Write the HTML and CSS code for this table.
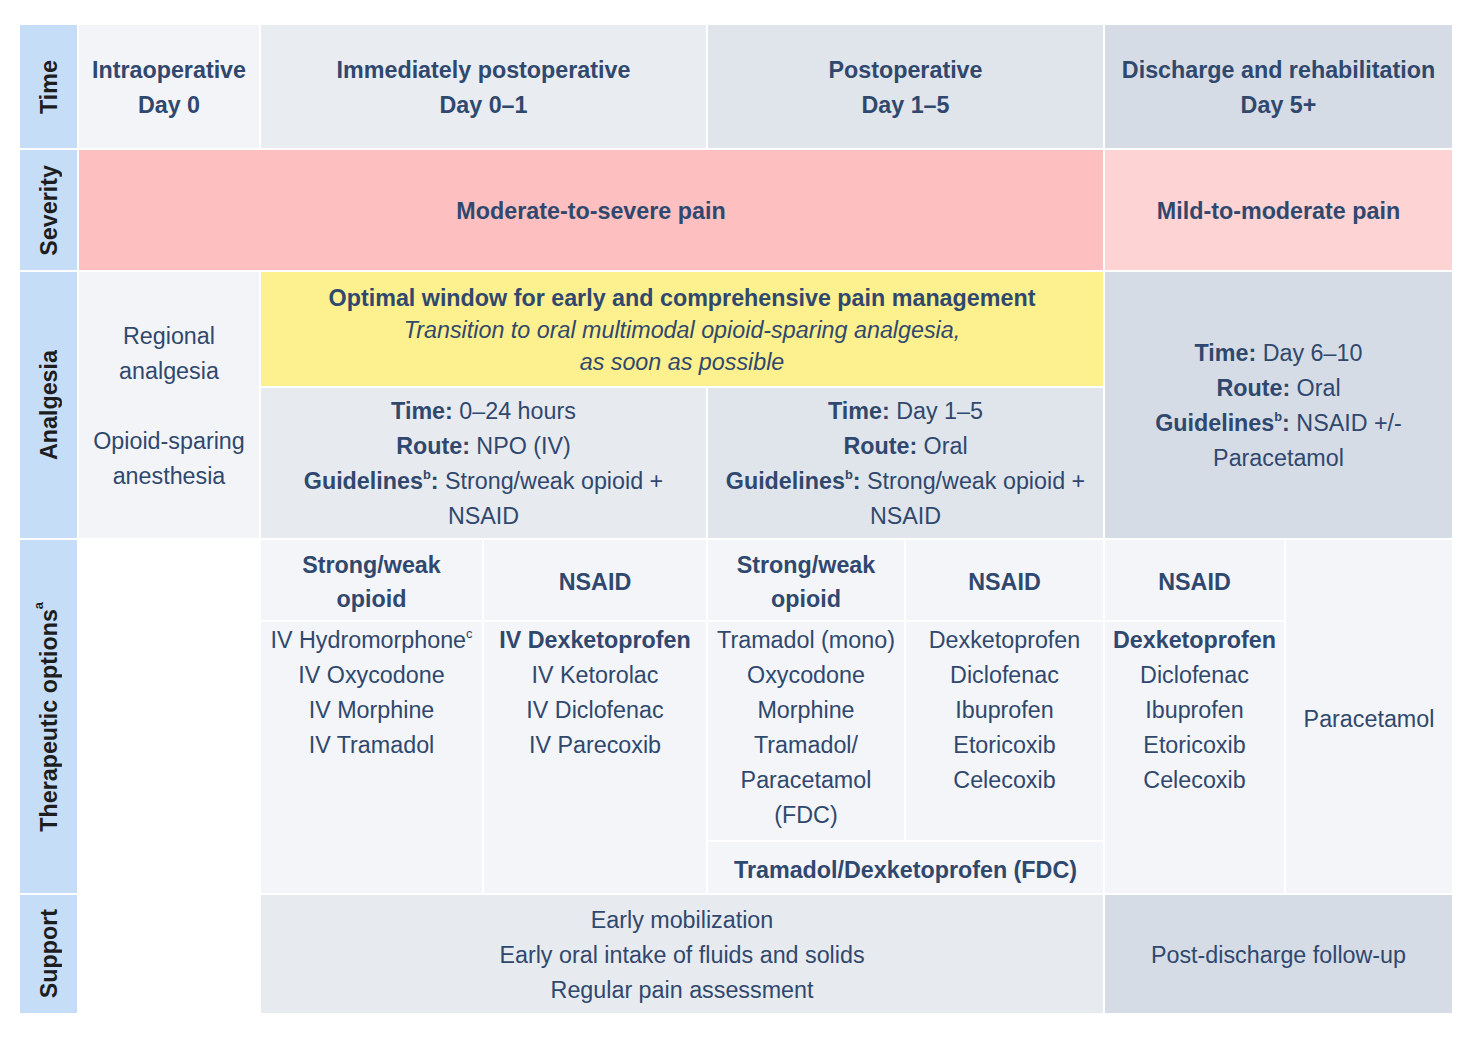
FILE: index.html
```html
<!DOCTYPE html>
<html lang="en">
<head>
<meta charset="utf-8">
<title>Perioperative pain management</title>
<link rel="stylesheet" href="styles.css">
</head>
<body>
<div class="chart">
  <!-- Time row -->
  <div class="cell label lab-time"><span class="vtext">Time</span></div>
  <div class="cell head bg-a c-a r-1"><b>Intraoperative<br>Day 0</b></div>
  <div class="cell head bg-b c-b r-1"><b>Immediately postoperative<br>Day 0–1</b></div>
  <div class="cell head bg-c c-c r-1"><b>Postoperative<br>Day 1–5</b></div>
  <div class="cell head bg-d c-d r-1"><b>Discharge and rehabilitation<br>Day 5+</b></div>

  <!-- Severity row -->
  <div class="cell label lab-sev"><span class="vtext">Severity</span></div>
  <div class="cell sev-strong"><b>Moderate-to-severe pain</b></div>
  <div class="cell sev-mild"><b>Mild-to-moderate pain</b></div>

  <!-- Analgesia -->
  <div class="cell label lab-anal"><span class="vtext">Analgesia</span></div>
  <div class="cell bg-a anal-a">Regional<br>analgesia<br><br>Opioid-sparing<br>anesthesia</div>
  <div class="cell window">
    <div><b>Optimal window for early and comprehensive pain management</b><br><i>Transition to oral multimodal opioid-sparing analgesia,<br>as soon as possible</i></div>
  </div>
  <div class="cell bg-b2 anal-b"><div><b>Time:</b> 0–24 hours<br><b>Route:</b> NPO (IV)<br><b>Guidelines<sup>b</sup>:</b> Strong/weak opioid +<br>NSAID</div></div>
  <div class="cell bg-c anal-c"><div><b>Time:</b> Day 1–5<br><b>Route:</b> Oral<br><b>Guidelines<sup>b</sup>:</b> Strong/weak opioid +<br>NSAID</div></div>
  <div class="cell bg-d anal-d"><div><b>Time:</b> Day 6–10<br><b>Route:</b> Oral<br><b>Guidelines<sup>b</sup>:</b> NSAID +/-<br>Paracetamol</div></div>

  <!-- Therapeutic options -->
  <div class="cell label lab-ther"><span class="vtext">Therapeutic options<sup>a</sup></span></div>

  <div class="cell th-head bg-t tb1"><b>Strong/weak<br>opioid</b></div>
  <div class="cell th-head bg-t tb2"><b>NSAID</b></div>
  <div class="cell th-head bg-t tc1"><b>Strong/weak<br>opioid</b></div>
  <div class="cell th-head bg-t tc2"><b>NSAID</b></div>
  <div class="cell th-head bg-t td1"><b>NSAID</b></div>
  <div class="cell bg-t td2">Paracetamol</div>

  <div class="cell list bg-t lb1"><div>IV Hydromorphone<sup>c</sup><br>IV Oxycodone<br>IV Morphine<br>IV Tramadol</div></div>
  <div class="cell list bg-t lb2"><div><b>IV Dexketoprofen</b><br>IV Ketorolac<br>IV Diclofenac<br>IV Parecoxib</div></div>
  <div class="cell list bg-t lc1"><div>Tramadol (mono)<br>Oxycodone<br>Morphine<br>Tramadol/<br>Paracetamol<br>(FDC)</div></div>
  <div class="cell list bg-t lc2"><div>Dexketoprofen<br>Diclofenac<br>Ibuprofen<br>Etoricoxib<br>Celecoxib</div></div>
  <div class="cell list bg-t ld1"><div><b>Dexketoprofen</b><br>Diclofenac<br>Ibuprofen<br>Etoricoxib<br>Celecoxib</div></div>
  <div class="cell bg-t fdc"><b>Tramadol/Dexketoprofen (FDC)</b></div>

  <!-- Support -->
  <div class="cell label lab-sup"><span class="vtext">Support</span></div>
  <div class="cell bg-b2 sup-main"><div>Early mobilization<br>Early oral intake of fluids and solids<br>Regular pain assessment</div></div>
  <div class="cell bg-d sup-d">Post-discharge follow-up</div>
</div>
</body>
</html>
```
FILE: styles.css
```css
html, body {
  margin: 0;
  padding: 0;
  background: #ffffff;
}

body {
  font-family: "Liberation Sans", Arial, sans-serif;
  font-size: 23.3px;
  line-height: 35px;
  color: #30486d;
}

.chart {
  display: grid;
  grid-template-columns: 57px 180px 221px 222px 196px 197px 179px 166px;
  grid-template-rows: 123px 120px 114px 150px 80px 218px 51px 118px;
  gap: 2px;
  margin: 25px 0 0 20px;
  width: 1432px;
}

.cell {
  display: flex;
  align-items: center;
  justify-content: center;
  text-align: center;
  min-width: 0;
  overflow: hidden;
  padding-top: 2px;
  box-sizing: border-box;
}

b { font-weight: 700; }

sup {
  font-size: 0.55em;
  line-height: 0;
  vertical-align: 0.75em;
}

/* vertical labels */
.label {
  background: #c6ddf8;
  color: #1e1e1e;
  font-weight: 700;
  padding-top: 0;
}
.vtext {
  writing-mode: vertical-rl;
  transform: rotate(180deg);
  white-space: nowrap;
  line-height: 28px;
}
.lab-time { grid-column: 1; grid-row: 1; }
.lab-sev  { grid-column: 1; grid-row: 2; }
.lab-anal { grid-column: 1; grid-row: 3 / 5; }
.lab-ther { grid-column: 1; grid-row: 5 / 8; }
.lab-sup  { grid-column: 1; grid-row: 8; }

/* backgrounds */
.bg-a  { background: #f3f4f8; }
.bg-b  { background: #e9ecf1; }
.bg-b2 { background: #e7eaef; }
.bg-c  { background: #e0e5ec; }
.bg-d  { background: #d5dce6; }
.bg-t  { background: #f3f5f9; }

/* column spans */
.c-a { grid-column: 2; }
.c-b { grid-column: 3 / 5; }
.c-c { grid-column: 5 / 7; }
.c-d { grid-column: 7 / 9; }
.r-1 { grid-row: 1; }

/* severity */
.sev-strong {
  grid-column: 2 / 7;
  grid-row: 2;
  background: #fdbfc0;
}
.sev-mild {
  grid-column: 7 / 9;
  grid-row: 2;
  background: #fdd3d4;
}

/* analgesia */
.anal-a { grid-column: 2; grid-row: 3 / 5; }
.window {
  grid-column: 3 / 7;
  grid-row: 3;
  background: #fdf08e;
  line-height: 32px;
}
.anal-b { grid-column: 3 / 5; grid-row: 4; }
.anal-c { grid-column: 5 / 7; grid-row: 4; }
.anal-d { grid-column: 7 / 9; grid-row: 3 / 5; }

/* therapeutic options */
.th-head { line-height: 34px; padding-top: 4px; }
.tb1 { grid-column: 3; grid-row: 5; }
.tb2 { grid-column: 4; grid-row: 5; }
.tc1 { grid-column: 5; grid-row: 5; }
.tc2 { grid-column: 6; grid-row: 5; }
.td1 { grid-column: 7; grid-row: 5; }
.td2 { grid-column: 8; grid-row: 5 / 8; padding-top: 5px; }

.list {
  align-items: flex-start;
  padding-top: 1px;
}
.lb1 { grid-column: 3; grid-row: 6 / 8; }
.lb2 { grid-column: 4; grid-row: 6 / 8; }
.lc1 { grid-column: 5; grid-row: 6; }
.lc2 { grid-column: 6; grid-row: 6; }
.ld1 { grid-column: 7; grid-row: 6 / 8; }
.fdc { grid-column: 5 / 7; grid-row: 7; padding-top: 5px; }

/* support */
.sup-main { grid-column: 3 / 7; grid-row: 8; padding-top: 3px; }
.sup-d { grid-column: 7 / 9; grid-row: 8; padding-top: 3px; }
```
